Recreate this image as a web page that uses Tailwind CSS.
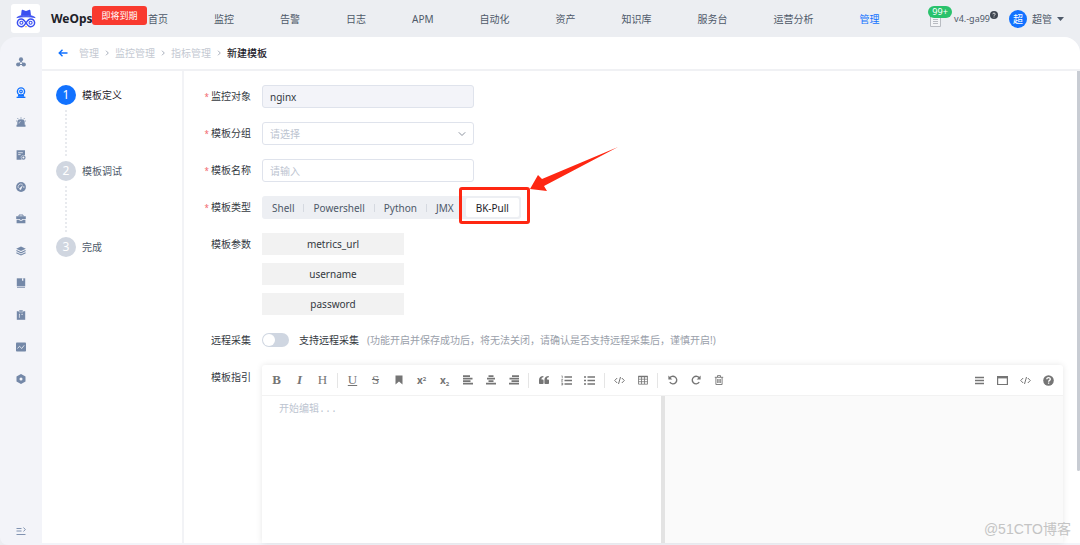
<!DOCTYPE html>
<html lang="zh-CN">
<head>
<meta charset="utf-8">
<meta name="viewport" content="width=device-width, initial-scale=1">
<title>WeOps - 新建模板</title>
<script src="https://cdn.jsdelivr.net/npm/@tailwindcss/browser@4"></script>
</head>
<body class="flex h-screen flex-col overflow-hidden bg-[#eceef2] font-['Noto_Sans','Noto_Sans_CJK_SC',sans-serif] text-[10px] leading-4 text-[#4e5969]">

<header class="flex h-[37px] shrink-0 items-center pr-4 pl-[11px]">
  <div class="relative flex w-[137px] shrink-0 items-center gap-[11px]">
    <span class="flex size-[29px] items-center justify-center rounded-[3px] bg-white">
      <svg class="size-[20px]" viewBox="0 0 20 20" fill="none">
        <path d="M5 6.6 5.6 1.6c.1-.7.8-.9 1.5-.6L10 2.1 12.900 1c.7-.3 1.400-.1 1.500.6L15 6.600z" fill="#3a4ff0"/>
        <path d="M.8 8.600C3 6.900 6.500 6.200 10 6.200s7 .7 9.200 2.400C16.500 8.100 13.500 7.800 10 7.800S3.500 8.100.8 8.600z" fill="#3a4ff0" stroke="#3a4ff0" stroke-width=".8"/>
        <path d="M10 13.800C8.600 11.600 7.300 9.900 5.300 9.900a3.900 3.900 0 0 0 0 7.800c2 0 3.300-1.700 4.700-3.900 1.400-2.200 2.700-3.900 4.700-3.900a3.900 3.900 0 0 1 0 7.800c-2 0-3.300-1.700-4.700-3.900z" stroke="#3a4ff0" stroke-width="1.500"/>
        <circle cx="5.400" cy="13.800" r="1.500" stroke="#3a4ff0" stroke-width="1.100"/>
        <circle cx="14.600" cy="13.800" r="1.500" stroke="#3a4ff0" stroke-width="1.100"/>
        <path d="m9.200 17 .8 1.800.8-1.800z" fill="#f5a623"/>
      </svg>
    </span>
    <span class="text-xs font-bold text-[#1d2129]">WeOps</span>
    <span class="absolute top-[2px] left-[81px] flex h-[19px] w-[55px] items-center justify-center rounded-[3px] bg-[#f93a2f] text-[9px] whitespace-nowrap text-white">即将到期</span>
  </div>
  <nav class="flex gap-[46px] whitespace-nowrap">
    <a href="#">首页</a><a href="#">监控</a><a href="#">告警</a><a href="#">日志</a><a href="#">APM</a><a href="#">自动化</a><a href="#">资产</a><a href="#">知识库</a><a href="#">服务台</a><a href="#">运营分析</a><a href="#" class="text-[#1272ff]">管理</a>
  </nav>
  <div class="ml-auto flex shrink-0 items-center">
    <button type="button" aria-label="通知" class="relative mr-[13px]">
      <svg class="mt-1 h-[12px] w-[11px]" viewBox="0 0 11 12" fill="none" stroke="#b9bcc2"><path d="M.5.500h10v11H.5z" fill="#f4f5f7"/><path d="M3 4.500h5M3 6.500h5M3 8.500h5"/></svg>
      <span class="absolute -top-[5px] -left-[2px] flex h-[12px] w-[24px] items-center justify-center rounded-full bg-[#2ac26c] text-[9px] text-white">99+</span>
    </button>
    <span class="text-[9px]">v4.-ga99</span>
    <svg class="mr-[11px] mb-[7px] size-2" viewBox="0 0 8 8"><circle cx="4" cy="4" r="4" fill="#3f4650"/><path d="M2.800 3.200c0-1.600 2.400-1.600 2.400 0 0 .8-1.200.8-1.200 1.600M4 5.600v.8" stroke="#fff" stroke-width=".8" fill="none"/></svg>
    <button type="button" class="flex items-center gap-[5px]">
      <span class="flex size-[18px] items-center justify-center rounded-full bg-[#1272ff] text-white">超</span>
      <span>超管</span>
      <svg class="h-1 w-[7px]" viewBox="0 0 7 4"><path d="M0 0h7L3.500 4z" fill="#4e5969"/></svg>
    </button>
  </div>
</header>

<div class="flex min-h-0 flex-1 overflow-hidden rounded-t-2xl rounded-bl-lg bg-[#f3f4f9]">
  <aside class="flex w-[42px] shrink-0 flex-col items-center pt-[10px] pb-[9px] text-[#7488a8]">
    <a href="#" aria-label="应用" class="flex h-[30px] items-center"><svg class="size-[10px]" viewBox="0 0 10 10" fill="currentColor"><path d="M5 4 2.500 7.500h5z" fill="none" stroke="currentColor"/><circle cx="5" cy="2.400" r="2.100"/><circle cx="2.200" cy="7.500" r="2.100"/><circle cx="7.800" cy="7.500" r="2.100"/></svg></a>
    <a href="#" aria-label="监控" class="flex h-[30px] items-center text-[#1272ff]"><svg class="h-[11px] w-[10px]" viewBox="0 0 10 11" fill="none" stroke="currentColor"><circle cx="5" cy="4.500" r="3.600" stroke-width="1.400"/><circle cx="5" cy="4.500" r="1.300" stroke-width="1.200"/><path d="M3.200 7.500 2 9.200h6L6.800 7.500" fill="currentColor"/><path d="M.6 10.300h8.800" stroke-width="1.300"/></svg></a>
    <a href="#" aria-label="告警" class="flex h-[30px] items-center"><svg class="size-[10px]" viewBox="0 0 10 10" fill="currentColor"><path d="M1.300 8V5.500a3.700 3.200 0 0 1 7.400 0V8zM.5 7.800h9V9.800h-9z"/><path d="M5 .4v1.200M1.500 1.200l1 1.100M8.500 1.200l-1 1.100M.2 4h1.100M8.700 4h1.100" stroke="currentColor" stroke-width=".9"/><path d="M3 6.500c0-1.200.6-1.800 1.700-2" stroke="#f3f4f9" stroke-width=".6" fill="none"/></svg></a>
    <div class="flex flex-col pt-[2px]">
      <a href="#" aria-label="日志" class="flex h-8 items-center"><svg class="size-[10px]" viewBox="0 0 10 10" fill="currentColor"><path d="M.6.3h8.400V5H6.500L4.600 7l1 2.700H.6z"/><path d="M2.200 2.700h4.600M2.200 4.600h2.500" stroke="#f3f4f9" stroke-width=".8"/><circle cx="7.400" cy="7.500" r="1.600" fill="none" stroke="currentColor" stroke-width="1.200"/></svg></a>
      <a href="#" aria-label="仪表盘" class="flex h-8 items-center"><svg class="size-[10px]" viewBox="0 0 10 10"><circle cx="5" cy="5" r="4.900" fill="currentColor"/><path d="M2.200 6a3 3 0 0 1 4.300-3.600M7.700 4c.3.700.3 1.400.1 2" stroke="#f3f4f9" stroke-width=".7" fill="none"/><path d="m7 3-3 2.700a1 1 0 1 0 1.300 1.200z" fill="#f3f4f9"/></svg></a>
      <a href="#" aria-label="工具" class="flex h-8 items-center"><svg class="size-[10px]" viewBox="0 0 10 10" fill="currentColor"><path d="M3 2.500V1h4v1.500" fill="none" stroke="currentColor"/><path d="M.2 2.200h9.600V5H.2zM.6 5.700h3v1h2.800v-1h3v3.600H.6z"/><path d="M4.200 4.600h1.600v1.500H4.200z"/></svg></a>
      <a href="#" aria-label="资产" class="flex h-8 items-center"><svg class="size-[10px]" viewBox="0 0 10 10" fill="currentColor"><path d="m5 .5 4.800 2.200L5 5 .2 2.700z"/><path d="m.4 4.600L5 6.800l4.600-2.200M.4 6.700 5 8.900l4.600-2.200" fill="none" stroke="currentColor" stroke-width="1.100"/></svg></a>
      <a href="#" aria-label="知识库" class="flex h-8 items-center"><svg class="size-[10px]" viewBox="0 0 10 10" fill="currentColor"><path d="M.8.300H9.200v8H.8z"/><path d="M1 9.400h8" stroke="currentColor" stroke-width=".8"/><path d="M6 .3h1.300v2.600L6.700 2.400l-.7.5z" fill="#f3f4f9"/></svg></a>
      <a href="#" aria-label="工单" class="flex h-8 items-center"><svg class="size-[10px]" viewBox="0 0 10 10" fill="currentColor"><path d="M.8 1.200H9.200v8.600H.8z"/><path d="M3 0h4v2H3z" stroke="#f3f4f9" stroke-width=".5"/><path d="M3 4.300h1M5.200 4.300H7M3.400 4.300v3.500" stroke="#f3f4f9" stroke-width=".7"/></svg></a>
      <a href="#" aria-label="分析" class="flex h-8 items-center"><svg class="size-[10px]" viewBox="0 0 10 10"><rect y=".5" width="10" height="9" rx=".8" fill="currentColor"/><path d="m1.500 6.500 2-2.200L5.800 6.500l2.400-3.200" stroke="#f3f4f9" fill="none" stroke-width=".8"/></svg></a>
      <a href="#" aria-label="设置" class="flex h-8 items-center"><svg class="size-[10px]" viewBox="0 0 10 10"><path d="M5 0 9.500 2.500v5L5 10 .5 7.500v-5z" fill="currentColor"/><circle cx="5" cy="5" r="1.500" fill="#f3f4f9"/></svg></a>
    </div>
    <button type="button" aria-label="展开菜单" class="mt-auto"><svg class="size-[10px]" viewBox="0 0 10 10" fill="none" stroke="currentColor" stroke-width=".9"><path d="M.5 2.500h5M.5 5h5M.5 8.500h9M7.500 1.500 9.300 3.500 7.500 5.500"/></svg></button>
  </aside>

  <main class="mb-[2px] flex min-w-0 flex-1 flex-col bg-white">
    <nav class="flex h-[34px] shrink-0 items-center border-b-2 border-[#f0f1f4] pl-4 text-[#c4c9d2]">
      <button type="button" aria-label="返回" class="mr-[11px] text-[#1272ff]"><svg class="size-[10px]" viewBox="0 0 10 10" fill="none" stroke="currentColor" stroke-width="1.400"><path d="M9.500 5H1.200M4.500 1.700 1.200 5l3.300 3.300"/></svg></button>
      <a href="#">管理</a>
      <svg class="mx-[5px] size-[6px]" viewBox="0 0 6 6" fill="none" stroke="#a9b0bc"><path d="m2 .7 2.300 2.300L2 5.300"/></svg>
      <a href="#">监控管理</a>
      <svg class="mx-[5px] size-[6px]" viewBox="0 0 6 6" fill="none" stroke="#a9b0bc"><path d="m2 .7 2.300 2.300L2 5.300"/></svg>
      <a href="#">指标管理</a>
      <svg class="mx-[5px] size-[6px]" viewBox="0 0 6 6" fill="none" stroke="#a9b0bc"><path d="m2 .7 2.300 2.300L2 5.300"/></svg>
      <span class="font-medium text-[#1d2129]">新建模板</span>
    </nav>

    <div class="relative flex min-h-0 flex-1">
      <ol class="flex w-[142px] shrink-0 flex-col border-r-2 border-[#f2f3f6] pt-[14px] pl-[14px]">
        <li>
          <div class="flex items-center gap-[6px] text-[#1d2129]"><span class="flex size-5 items-center justify-center rounded-full bg-[#1272ff] text-xs text-white">1</span>模板定义</div>
          <div class="my-[5px] ml-[9px] h-[46px] border-l-2 border-dotted border-[#e8eaee]"></div>
        </li>
        <li>
          <div class="flex items-center gap-[6px]"><span class="flex size-5 items-center justify-center rounded-full bg-[#d0d6e0] text-xs text-white">2</span>模板调试</div>
          <div class="my-[5px] ml-[9px] h-[46px] border-l-2 border-dotted border-[#e8eaee]"></div>
        </li>
        <li>
          <div class="flex items-center gap-[6px]"><span class="flex size-5 items-center justify-center rounded-full bg-[#d0d6e0] text-xs text-white">3</span>完成</div>
        </li>
      </ol>

      <form class="flex min-w-0 flex-1 flex-col gap-[14px] pt-[14px] pr-[17px] text-[#34393f]">
        <div class="flex items-center gap-[11px]">
          <label for="target" class="w-[67px] shrink-0 text-right"><span class="mr-[2px] text-[8px] text-[#f2646b]">*</span>监控对象</label>
          <input id="target" type="text" value="nginx" readonly class="h-[23px] w-[212px] rounded-[3px] border border-[#dfe3ec] bg-[#f3f4f9] px-[7px]">
        </div>
        <div class="flex items-center gap-[11px]">
          <label for="group" class="w-[67px] shrink-0 text-right"><span class="mr-[2px] text-[8px] text-[#f2646b]">*</span>模板分组</label>
          <div class="relative">
            <select id="group" class="block h-[23px] w-[212px] appearance-none rounded-[3px] border border-[#dfe3ec] bg-white px-[7px] text-[#bcc4d0]"><option>请选择</option></select>
            <svg class="pointer-events-none absolute top-[8px] right-[8px] size-2" viewBox="0 0 8 8" fill="none" stroke="#8a919d"><path d="m.8 2.300 3.200 3.200 3.200-3.200"/></svg>
          </div>
        </div>
        <div class="flex items-center gap-[11px]">
          <label for="name" class="w-[67px] shrink-0 text-right"><span class="mr-[2px] text-[8px] text-[#f2646b]">*</span>模板名称</label>
          <input id="name" type="text" placeholder="请输入" class="h-[23px] w-[212px] rounded-[3px] border border-[#dfe3ec] px-[7px] placeholder:text-[#bcc4d0]">
        </div>
        <fieldset class="flex items-center gap-[11px]">
          <span class="w-[67px] shrink-0 text-right"><span class="mr-[2px] text-[8px] text-[#f2646b]">*</span>模板类型</span>
          <div class="flex h-[23px] items-center rounded-[3px] bg-[#edeff3] pr-[2px] pl-[10px] text-[#4e5969]">
            <label><input type="radio" name="kind" class="sr-only">Shell</label>
            <i class="mx-[9px] h-2 w-px bg-[#d5d9e0]"></i>
            <label><input type="radio" name="kind" class="sr-only">Powershell</label>
            <i class="mx-[9px] h-2 w-px bg-[#d5d9e0]"></i>
            <label><input type="radio" name="kind" class="sr-only">Python</label>
            <i class="mx-[9px] h-2 w-px bg-[#d5d9e0]"></i>
            <label><input type="radio" name="kind" class="sr-only">JMX</label>
            <label class="relative ml-3 flex h-[19px] items-center rounded-[2px] bg-white px-[10px] text-[#1d2129]"><input type="radio" name="kind" checked class="sr-only">BK-Pull
              <span class="absolute -top-[11px] -right-[11px] -bottom-[7px] -left-[7px] rounded-[3px] border-[3px] border-[#fe2712]"></span>
              <svg class="absolute bottom-[25px] left-[63px] h-[46px] w-[90px]" viewBox="0 0 90 46"><path d="M89 1 13 33 9 29 1 43l17 2-3-5z" fill="#fe2712"/></svg>
            </label>
          </div>
        </fieldset>
        <div class="flex gap-[11px]">
          <span class="w-[67px] shrink-0 pt-[3px] text-right">模板参数</span>
          <ul class="flex w-[142px] flex-col gap-2 text-center">
            <li class="bg-[#f2f2f2] py-[3px]">metrics_url</li>
            <li class="bg-[#f2f2f2] py-[3px]">username</li>
            <li class="bg-[#f2f2f2] py-[3px]">password</li>
          </ul>
        </div>
        <div class="flex h-[22px] shrink-0 items-center gap-[10px]">
          <label for="remote" class="mr-px w-[67px] shrink-0 text-right">远程采集</label>
          <input id="remote" type="checkbox" role="switch" class="h-[14px] w-[27px] appearance-none rounded-full bg-[#cfd6e1] before:m-px before:block before:size-3 before:rounded-full before:bg-white">
          <p class="text-[#9aa0aa]"><span class="mr-2 text-[#34393f]">支持远程采集</span>(功能开启并保存成功后，将无法关闭，请确认是否支持远程采集后，谨慎开启!)</p>
        </div>
        <div class="flex min-h-0 flex-1 gap-[11px]">
          <label for="guide" class="w-[67px] shrink-0 pt-1 text-right">模板指引</label>
          <div class="flex min-w-0 flex-1 flex-col rounded-t-[3px] shadow-[0_0_6px_rgba(0,0,0,0.1)]">
            <div class="flex h-[31px] shrink-0 items-center border-b border-[#f2f2f2] px-[3px] text-[#757575]">
              <button type="button" aria-label="粗体" class="w-[23px] font-['Liberation_Serif',serif] text-[13px] font-bold">B</button>
              <button type="button" aria-label="斜体" class="w-[23px] font-['Liberation_Serif',serif] text-[13px] font-bold italic">I</button>
              <button type="button" aria-label="标题" class="w-[23px] font-['Liberation_Serif',serif] text-[13px]">H</button>
              <i class="mx-[3px] h-[15px] w-px bg-[#e5e5e5]"></i>
              <button type="button" aria-label="下划线" class="w-[23px] font-['Liberation_Serif',serif] text-[13px] underline">U</button>
              <button type="button" aria-label="删除线" class="w-[23px] font-['Liberation_Serif',serif] text-[13px] line-through">S</button>
              <button type="button" aria-label="标记" class="flex w-[23px] justify-center"><svg class="size-[10px]" viewBox="0 0 10 10" fill="currentColor"><path d="M1.500.5h7v9L5 6.500 1.500 9.500z"/></svg></button>
              <button type="button" aria-label="上标" class="w-[23px] font-bold">x<sup class="text-[6px]">2</sup></button>
              <button type="button" aria-label="下标" class="w-[23px] font-bold">x<sub class="text-[6px]">2</sub></button>
              <button type="button" aria-label="左对齐" class="flex w-[23px] justify-center"><svg class="size-[10px]" viewBox="0 0 10 10" stroke="currentColor" stroke-width="1.700"><path d="M0 1.200h7M0 3.700h9.500M0 6.200h7.500M0 8.700h10"/></svg></button>
              <button type="button" aria-label="居中" class="flex w-[23px] justify-center"><svg class="size-[10px]" viewBox="0 0 10 10" stroke="currentColor" stroke-width="1.700"><path d="M2.500 1.200h5M1 3.700h8M2.500 6.200h5M0 8.700h10"/></svg></button>
              <button type="button" aria-label="右对齐" class="flex w-[23px] justify-center"><svg class="size-[10px]" viewBox="0 0 10 10" stroke="currentColor" stroke-width="1.700"><path d="M3 1.200h7M.5 3.700H10M2.500 6.200H10M0 8.700h10"/></svg></button>
              <i class="mx-[3px] h-[15px] w-px bg-[#e5e5e5]"></i>
              <button type="button" aria-label="引用" class="flex w-[23px] justify-center"><svg class="size-[10px]" viewBox="0 0 10 10" fill="currentColor"><path d="M4.400.9v1.300C3 2.200 2.500 3 2.500 4.500h1c.7 0 1.100.4 1.100 1.100v2.300c0 .7-.4 1.100-1.100 1.100H1.200C.4 9 0 8.600 0 7.900V5C0 2.300 1.800.9 4.400.9zM9.800.9v1.300C8.400 2.200 7.900 3 7.900 4.500h1c.7 0 1.100.4 1.100 1.100v2.300C10 8.600 9.600 9 8.900 9H6.600c-.8 0-1.200-.4-1.200-1.100V5c0-2.700 1.800-4.100 4.400-4.100z"/></svg></button>
              <button type="button" aria-label="有序列表" class="flex w-[23px] justify-center"><svg class="size-[11px]" viewBox="0 0 11 11" stroke="currentColor" fill="none"><path d="M3.500 2H11M3.500 5.500H11M3.500 9H11" stroke-width="1.600"/><path d="M.5.900h.8v2.300M.3 4.400h1.400L.4 6.300h1.400M.3 8h1.400v1H.7h1v1H.3" stroke-width=".7"/></svg></button>
              <button type="button" aria-label="无序列表" class="flex w-[23px] justify-center"><svg class="size-[11px]" viewBox="0 0 11 11" stroke="currentColor"><path d="M0 2h2M3.500 2H11M0 5.500h2M3.500 5.500H11M0 9h2M3.500 9H11" stroke-width="1.700"/></svg></button>
              <i class="mx-[3px] h-[15px] w-px bg-[#e5e5e5]"></i>
              <button type="button" aria-label="代码" class="flex w-[23px] justify-center"><svg class="size-[11px]" viewBox="0 0 11 11" fill="none" stroke="currentColor"><path d="M3.200 3 .7 5.500 3.200 8M7.800 3l2.500 2.500L7.800 8M6.500 2l-2 7"/></svg></button>
              <button type="button" aria-label="表格" class="flex w-[23px] justify-center"><svg class="size-[10px]" viewBox="0 0 10 10" fill="none" stroke="currentColor" stroke-width=".8"><path d="M.5 1.500h9v7.700h-9zM.5 4.200h9M.5 6.700h9M3.500 2v7M6.500 2v7"/><path d="M.3 1.500h9.400" stroke-width="1.500"/></svg></button>
              <i class="mx-[3px] h-[15px] w-px bg-[#e5e5e5]"></i>
              <button type="button" aria-label="撤销" class="flex w-[23px] justify-center"><svg class="size-[10px]" viewBox="0 0 10 10" fill="none" stroke="currentColor" stroke-width="1.400"><path d="M1.500 3.400A3.800 3.800 0 1 1 1.800 7.200"/><path d="M.4.500v3.900h3.900z" fill="currentColor" stroke="none"/></svg></button>
              <button type="button" aria-label="重做" class="flex w-[23px] justify-center"><svg class="size-[10px]" viewBox="0 0 10 10" fill="none" stroke="currentColor" stroke-width="1.400"><path d="M8.500 3.400a3.800 3.800 0 1 0-.3 3.800"/><path d="M9.600.5v3.900H5.700z" fill="currentColor" stroke="none"/></svg></button>
              <button type="button" aria-label="清空" class="flex w-[23px] justify-center"><svg class="size-[10px]" viewBox="0 0 10 10" fill="none" stroke="currentColor" stroke-width=".9"><path d="M.8 2.300h8.400M1.900 2.300v7.200h6.200V2.300M3.500 2V.6h3V2M3.700 4v4M5 4v4M6.300 4v4"/></svg></button>
              <span class="ml-auto"></span>
              <button type="button" aria-label="目录" class="flex w-[23px] justify-center"><svg class="size-[9px]" viewBox="0 0 9 9" stroke="currentColor" stroke-width="1.600"><path d="M0 1.500h9M0 4.500h9M0 7.500h9"/></svg></button>
              <button type="button" aria-label="单栏预览" class="flex w-[23px] justify-center"><svg class="size-[11px]" viewBox="0 0 11 11" fill="none" stroke="currentColor"><path d="M.6 1.500h9.800v8H.6z" stroke-width="1.200"/><path d="M.3 2.200h10.400" stroke-width="2.400"/></svg></button>
              <button type="button" aria-label="源码" class="flex w-[23px] justify-center"><svg class="size-[11px]" viewBox="0 0 11 11" fill="none" stroke="currentColor"><path d="M3.200 3 .7 5.500 3.200 8M7.800 3l2.500 2.500L7.800 8M6.500 2l-2 7"/></svg></button>
              <button type="button" aria-label="帮助" class="flex w-[23px] justify-center"><svg class="size-[11px]" viewBox="0 0 11 11"><circle cx="5.500" cy="5.500" r="5.300" fill="currentColor"/><path d="M3.800 4.300c0-2.300 3.500-2.200 3.500-.1 0 1.200-1.700 1.200-1.700 2.500M5.600 7.500v1.300" stroke="#fff" stroke-width="1.300" fill="none"/></svg></button>
            </div>
            <div class="grid min-h-0 flex-1 grid-cols-[1fr_4px_1fr]">
              <textarea id="guide" placeholder="开始编辑..." class="min-w-0 resize-none px-[17px] py-[6px] font-['Liberation_Mono','Noto_Sans_CJK_SC',monospace] placeholder:text-[#bcc4d0]"></textarea>
              <div class="bg-[#e3e3e3]"></div>
              <div class="bg-[#fafafa]"></div>
            </div>
          </div>
        </div>
      </form>

      <div class="absolute top-0 right-0 h-[400px] w-[3px] rounded-b-sm bg-[#c8ccd3]"></div>
      <span class="absolute right-[9px] bottom-1 font-['Liberation_Sans','Noto_Sans_CJK_SC',sans-serif] text-[14px] leading-5 text-[#c4c4c4]">@51CTO博客</span>
    </div>
  </main>
</div>
</body>
</html>
